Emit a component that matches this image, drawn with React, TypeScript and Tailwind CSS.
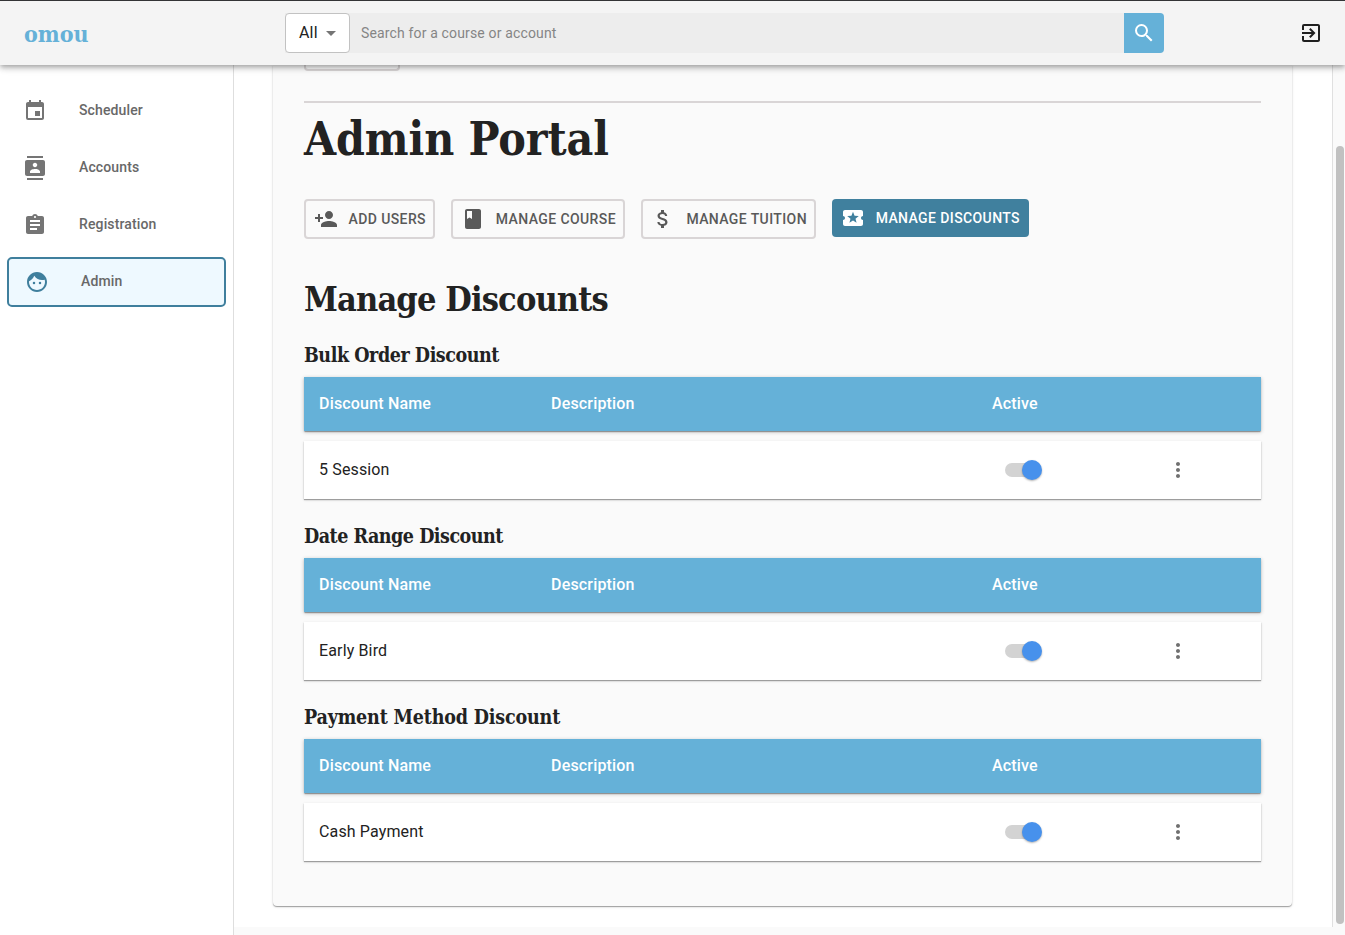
import React from "react";
import {
  MdArrowDropDown,
  MdAssignment,
  MdAttachMoney,
  MdClass,
  MdContacts,
  MdEvent,
  MdExitToApp,
  MdFace,
  MdLocalPlay,
  MdMoreVert,
  MdPersonAdd,
  MdSearch,
} from "react-icons/md";
import type { IconType } from "react-icons";

const slab = "font-['Roboto_Slab','DejaVu_Serif_Condensed','DejaVu_Serif',serif] font-bold [font-stretch:condensed]";

function Header() {
  return (
    <header className="relative z-10 flex h-[65px] shrink-0 items-center border-t border-[#333436] bg-[#f4f4f4] shadow-[0px_2px_4px_-1px_rgba(0,0,0,0.2),0px_4px_5px_0px_rgba(0,0,0,0.14),0px_1px_10px_0px_rgba(0,0,0,0.12)]">
      <div className={`${slab} w-[285px] shrink-0 pt-[2px] pl-6 text-[23px] leading-[30px] text-[#65b1d8]`}>omou</div>
      <div className="flex h-10 w-[879px] items-center rounded-r-[4px] bg-[#ededed]">
        <button className="flex h-10 w-[65px] items-center rounded-[4px] border border-[#c2c2c2] bg-white pl-[13px] text-[16px] tracking-[0.15px] text-[#222]">
          All
          <MdArrowDropDown className="ml-[1px] size-6 shrink-0 text-[#757575]" />
        </button>
        <div className="flex-1 pl-[11px] text-[14px] tracking-[0.15px] text-[#858585]">Search for a course or account</div>
        <button className="flex h-10 w-10 items-center justify-center rounded-r-[4px] bg-[#65b1d8] text-white">
          <MdSearch className="size-6" />
        </button>
      </div>
      <MdExitToApp className="mr-[22px] ml-auto size-6 text-[#1f1f1f]" />
    </header>
  );
}

const navItems: { label: string; Icon: IconType }[] = [
  { label: "Scheduler", Icon: MdEvent },
  { label: "Accounts", Icon: MdContacts },
  { label: "Registration", Icon: MdAssignment },
];

function Sidebar() {
  return (
    <nav className="w-[234px] shrink-0 border-r border-[#dedede] bg-white pt-[17px] text-[14px] font-medium tracking-[0.13px] text-[#686868]">
      {navItems.map(({ label, Icon }) => (
        <div key={label} className="flex h-[57px] items-center pl-[23px]">
          <Icon className="size-6 text-[#757575]" />
          <span className="ml-8">{label}</span>
        </div>
      ))}
      <div className="mt-1 ml-[7px] flex h-[50px] w-[219px] items-center rounded-[5px] border-2 border-[#3f7f9d] bg-[#eef9ff] pl-4">
        <MdFace className="size-6 text-[#3f7f9d]" />
        <span className="mb-[2px] ml-8">Admin</span>
      </div>
    </nav>
  );
}

const actions: { label: string; Icon: IconType; box: string }[] = [
  { label: "ADD USERS", Icon: MdPersonAdd, box: "w-[131px] pl-2" },
  { label: "MANAGE COURSE", Icon: MdClass, box: "w-[174px] pl-2" },
  { label: "MANAGE TUITION", Icon: MdAttachMoney, box: "w-[175px] pl-2" },
];

function Actions() {
  return (
    <div className="flex h-10 items-start gap-4 text-[14px] font-medium tracking-[0.4px] whitespace-nowrap">
      {actions.map(({ label, Icon, box }) => (
        <button
          key={label}
          className={`${box} flex h-10 shrink-0 items-center justify-between rounded-[4px] border-2 border-[#d9d5d6] pr-[7px] text-[#595959]`}
        >
          <Icon className="size-6" />
          {label}
        </button>
      ))}
      <button className="flex h-[38px] w-[197px] shrink-0 items-center justify-between rounded-[4px] bg-[#40809e] pr-[9px] pl-[9px] text-white">
        <MdLocalPlay className="size-6" />
        MANAGE DISCOUNTS
      </button>
    </div>
  );
}

const discounts = [
  { title: "Bulk Order Discount", name: "5 Session", tracking: "tracking-[-0.45px]" },
  { title: "Date Range Discount", name: "Early Bird", tracking: "tracking-[-0.5px]" },
  { title: "Payment Method Discount", name: "Cash Payment", tracking: "tracking-[-0.18px]" },
];

function DiscountTable({ title, name, tracking }: { title: string; name: string; tracking: string }) {
  const columns = "grid grid-cols-[232px_441px_174px_1fr] items-center pl-[15px]";
  return (
    <section className="h-[181px]">
      <h3 className={`${slab} ${tracking} flex h-[37px] items-start pt-px text-[19.5px] leading-[30px] whitespace-nowrap`}>
        {title}
      </h3>
      <div
        className={`${columns} h-[54px] bg-[#65b1d8] text-[16px] font-medium tracking-[0.18px] text-white shadow-[0px_2px_1px_-1px_rgba(0,0,0,0.2),0px_1px_1px_0px_rgba(0,0,0,0.14),0px_1px_4px_0px_rgba(0,0,0,0.24)]`}
      >
        <span>Discount Name</span>
        <span>Description</span>
        <span>Active</span>
      </div>
      <div
        className={`${columns} mt-[10px] h-[58px] bg-white text-[16px] tracking-[0.14px] shadow-[0px_1px_1px_0px_rgba(0,0,0,0.32),0px_1px_3px_0px_rgba(0,0,0,0.12)]`}
      >
        <span>{name}</span>
        <span />
        <span className="ml-[13px] flex h-[14px] w-[34px] items-center justify-end rounded-full bg-[#d3d3d3]">
          <span className="-mr-[3px] size-5 rounded-full bg-[#4791ec] shadow-[0px_1px_2px_0px_rgba(0,0,0,0.3)]" />
        </span>
        <MdMoreVert className="size-6 text-[#707070]" />
      </div>
    </section>
  );
}

export default function App() {
  return (
    <div className="flex h-[935px] w-[1345px] flex-col overflow-hidden bg-[#fafafa] font-['Roboto',sans-serif] text-[#222]">
      <Header />
      <div className="flex h-[870px]">
        <Sidebar />
        <main className="h-[862px] w-[1099px] shrink-0 border-r border-[#e0e0e0] bg-white pl-[39px]">
          <div className="h-[841px] w-[1019px] rounded-b-[4px] bg-[#fafafa] px-[31px] shadow-[0px_1px_1px_0px_rgba(0,0,0,0.32),0px_1px_3px_0px_rgba(0,0,0,0.12)]">
            <div className="h-[6px] w-[96px] rounded-b-[4px] border-2 border-t-0 border-[#d9d5d6]" />
            <div className="mt-[30px] h-[2px] bg-[#d9d5d6]" />
            <h1 className={`${slab} mt-1 h-[92px] text-[46px] leading-[64px] tracking-[-0.1px] whitespace-nowrap`}>
              Admin Portal
            </h1>
            <Actions />
            <h2 className={`${slab} mt-[36px] h-[65px] text-[34px] leading-[48px] tracking-[-0.85px] whitespace-nowrap`}>
              Manage Discounts
            </h2>
            {discounts.map((discount) => (
              <DiscountTable key={discount.title} {...discount} />
            ))}
          </div>
        </main>
        <div className="flex-1 pt-[81px] pl-[3px]">
          <div className="h-[778px] w-2 rounded-full bg-[#c1c1c1]" />
        </div>
      </div>
    </div>
  );
}
